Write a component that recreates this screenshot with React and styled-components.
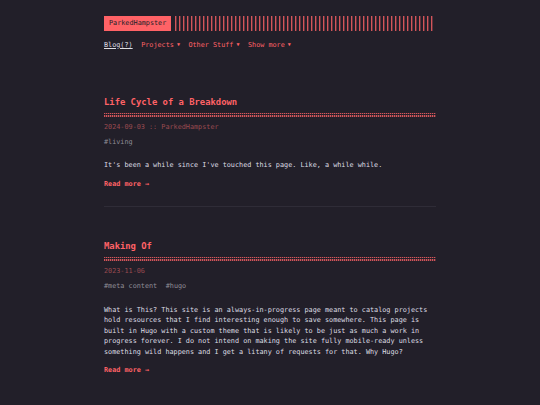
import React from 'react';
import styled, { createGlobalStyle } from 'styled-components';

const accent = '#ff6266';
const bg = '#221f29';

const GlobalStyle = createGlobalStyle`
  html, body {
    margin: 0;
    padding: 0;
    background: ${bg};
  }
  body {
    font-family: "DejaVu Sans Mono", "Liberation Mono", monospace;
    font-size: 6.8px;
    line-height: 1.54;
    color: #dedde3;
  }
`;

const Page = styled.div`
  width: 332px;
  margin: 0 auto;
  padding-top: 15.7px;
  min-height: 405px;
  box-sizing: border-box;
`;

const Header = styled.header`
  display: flex;
  flex-direction: column;
`;

const LogoRow = styled.div`
  display: flex;
  align-items: stretch;
  gap: 2px;
`;

const Logo = styled.a`
  background: ${accent};
  color: ${bg};
  padding: 2.3px 5px;
  text-decoration: none;
`;

const Stripes = styled.div`
  flex: 1;
  margin-right: 3px;
  background: repeating-linear-gradient(
    90deg,
    transparent 0,
    transparent 2px,
    rgba(255, 98, 102, 0.8) 2px,
    rgba(255, 98, 102, 0.8) 3px,
    rgba(255, 98, 102, 0.3) 3px,
    rgba(255, 98, 102, 0.3) 4px
  );
`;

const Menu = styled.nav`
  display: flex;
  gap: 8.5px;
  margin-top: 8.8px;
`;

const MenuItem = styled.a`
  color: ${(p) => (p.$active ? '#dedde3' : accent)};
  text-decoration: ${(p) => (p.$active ? 'underline' : 'none')};
  text-underline-offset: 1px;
`;

const Caret = styled.span`
  display: inline-block;
  margin-left: 3px;
  font-size: 5px;
  vertical-align: 1px;
`;

const Post = styled.article`
  padding-top: ${(p) => (p.$first ? '47px' : '34px')};
  padding-bottom: 17px;
  border-bottom: ${(p) => (p.$last ? 'none' : '1px solid #2f2c37')};
`;

/* double dotted rule under the title */
const Title = styled.h1`
  position: relative;
  margin: 0;
  font-size: 8.85px;
  line-height: 1.3;
  font-weight: bold;
  color: ${accent};
  padding-bottom: 8.5px;

  &::after {
    content: '';
    position: absolute;
    left: 0;
    right: 0;
    bottom: 0;
    height: 4px;
    background:
      linear-gradient(to bottom, transparent 0, transparent 1.5px, ${bg} 1.5px, ${bg} 2.5px, transparent 2.5px),
      repeating-linear-gradient(90deg, rgba(255, 98, 102, 0.8) 0, rgba(255, 98, 102, 0.8) 1px, rgba(255, 98, 102, 0.25) 1px, rgba(255, 98, 102, 0.25) 2px);
  }
`;

const Meta = styled.div`
  margin-top: 5.1px;
  color: #9a4a50;
`;

const Tags = styled.div`
  margin-top: 4.5px;
  color: #8f8d96;
`;

const Tag = styled.span`
  margin-right: 8.5px;
`;

const Body = styled.p`
  margin: 12.9px 0 0;
  color: #dedde3;
`;

const ReadMore = styled.a`
  display: block;
  margin-top: 8.1px;
  color: ${accent};
  font-weight: bold;
  text-decoration: none;
`;

const posts = [
  {
    title: 'Life Cycle of a Breakdown',
    meta: '2024-09-03 :: ParkedHampster',
    tags: ['#living'],
    body: "It's been a while since I've touched this page. Like, a while while.",
  },
  {
    title: 'Making Of',
    meta: '2023-11-06',
    tags: ['#meta content', '#hugo'],
    body:
      'What is This? This site is an always-in-progress page meant to catalog projects hold resources that I find interesting enough to save somewhere. This page is built in Hugo with a custom theme that is likely to be just as much a work in progress forever. I do not intend on making the site fully mobile-ready unless something wild happens and I get a litany of requests for that. Why Hugo?',
  },
];

export default function App() {
  return (
    <>
      <GlobalStyle />
      <Page>
        <Header>
          <LogoRow>
            <Logo href="#">ParkedHampster</Logo>
            <Stripes />
          </LogoRow>
          <Menu>
            <MenuItem $active href="#">Blog(?)</MenuItem>
            <MenuItem href="#">Projects<Caret>▼</Caret></MenuItem>
            <MenuItem href="#">Other Stuff<Caret>▼</Caret></MenuItem>
            <MenuItem href="#">Show more<Caret>▼</Caret></MenuItem>
          </Menu>
        </Header>
        {posts.map((post, i) => (
          <Post key={post.title} $first={i === 0} $last={i === posts.length - 1}>
            <Title>{post.title}</Title>
            <Meta>{post.meta}</Meta>
            <Tags>
              {post.tags.map((t) => (
                <Tag key={t}>{t}</Tag>
              ))}
            </Tags>
            <Body>{post.body}</Body>
            <ReadMore href="#">Read more →</ReadMore>
          </Post>
        ))}
      </Page>
    </>
  );
}
